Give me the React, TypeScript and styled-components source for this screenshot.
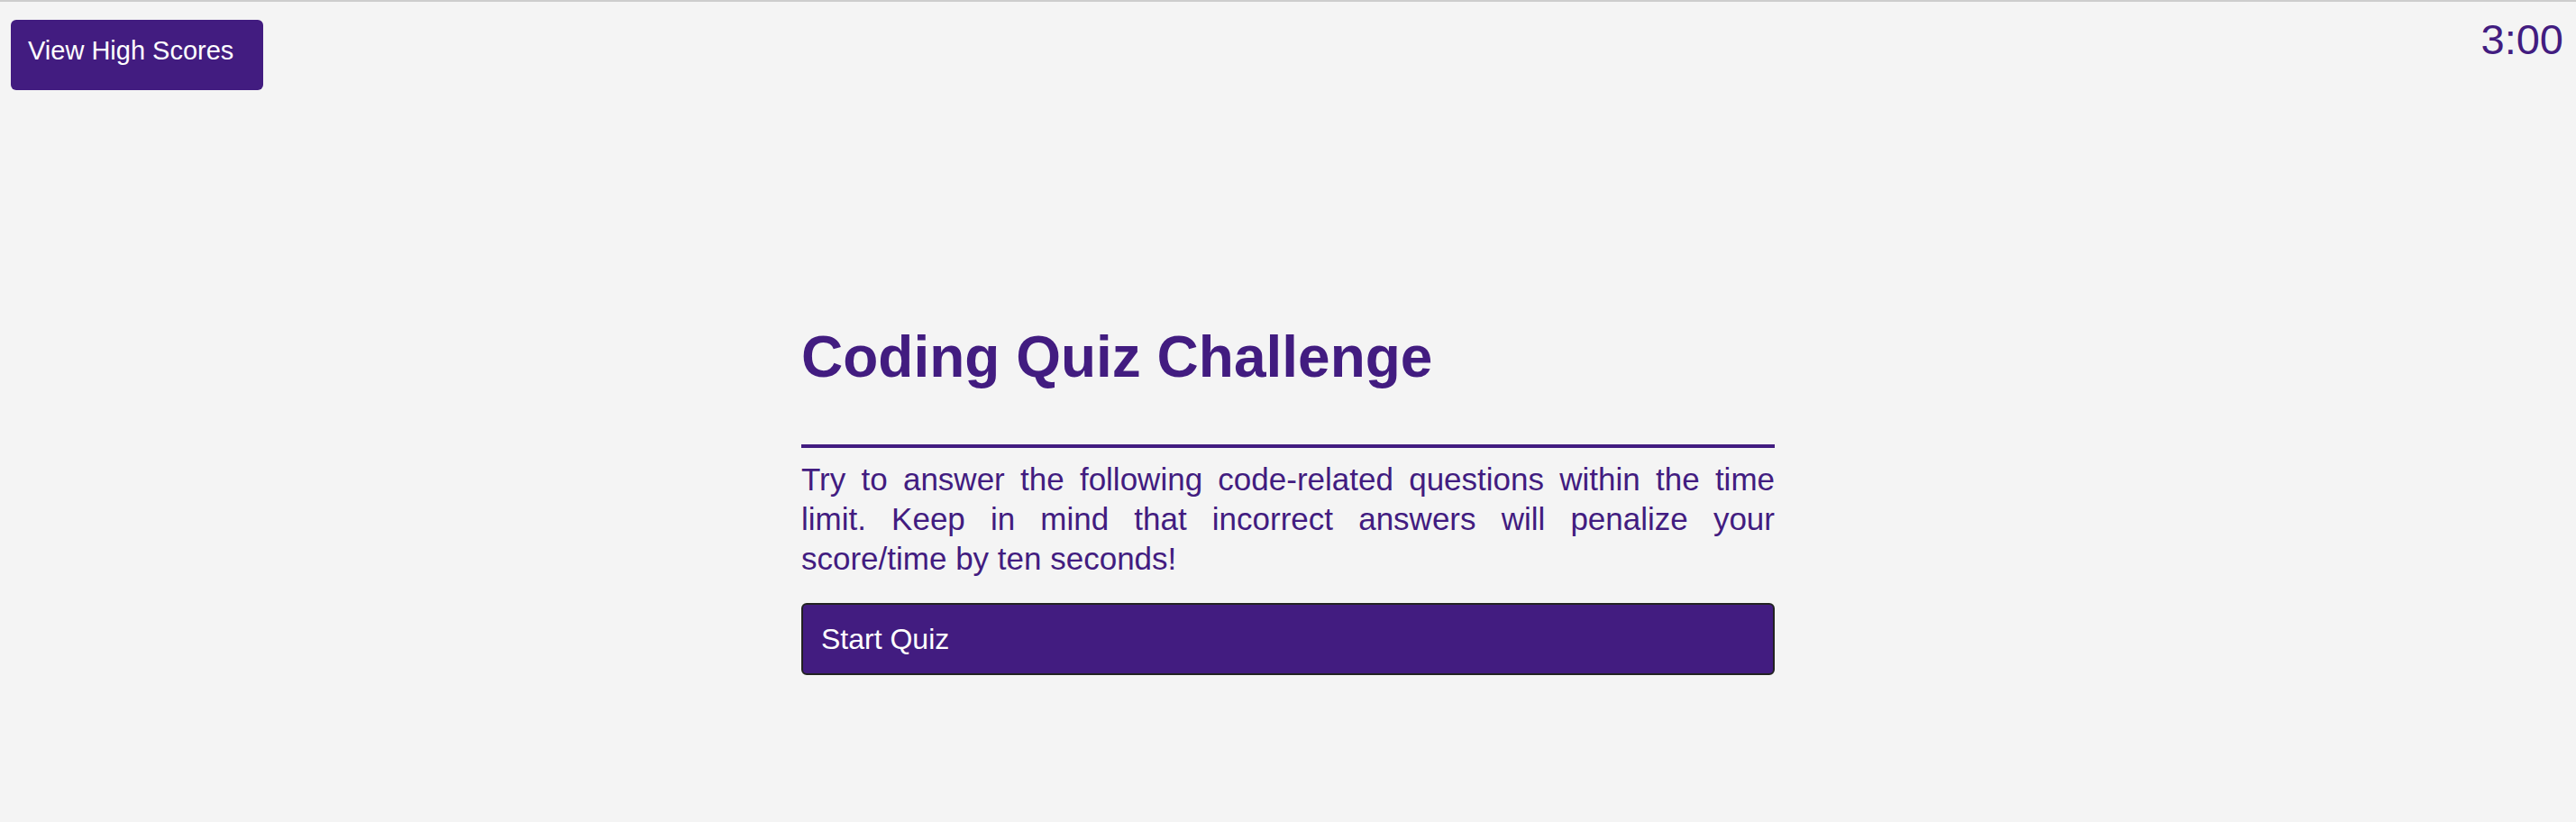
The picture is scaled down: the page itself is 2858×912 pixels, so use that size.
import React from "react";
import styled, { createGlobalStyle } from "styled-components";

const purple = "#421c80";

const Global = createGlobalStyle`
  html, body {
    margin: 0;
    padding: 0;
    background: #f4f4f4;
  }
  body {
    border-top: 2px solid #cdcdcd;
    font-family: "Liberation Sans", Arial, sans-serif;
  }
`;

const Header = styled.header`
  display: flex;
  justify-content: space-between;
  align-items: flex-start;
  padding: 20px 14px 0 12px;
`;

const ScoresButton = styled.button`
  box-sizing: border-box;
  width: 280px;
  height: 78px;
  padding: 18px 19px 0;
  display: flex;
  align-items: flex-start;
  background: ${purple};
  color: #ffffff;
  border: none;
  border-radius: 6px;
  font-family: "Liberation Sans", Arial, sans-serif;
  font-size: 29px;
  line-height: 32px;
  cursor: pointer;
`;

const Timer = styled.div`
  color: ${purple};
  font-family: "Liberation Sans", Arial, sans-serif;
  font-weight: 400;
  font-size: 47px;
  line-height: 44px;
`;

const Main = styled.main`
  width: 1080px;
  margin: 260px auto 0;
  display: flex;
  flex-direction: column;
`;

const Title = styled.h1`
  margin: 0;
  color: ${purple};
  font-size: 64px;
  line-height: 72px;
  font-weight: 700;
`;

const Rule = styled.hr`
  margin: 61px 0 0;
  height: 4px;
  border: none;
  background: ${purple};
`;

const Intro = styled.p`
  margin: 13px 0 0;
  color: ${purple};
  font-size: 35px;
  line-height: 44px;
  text-align: justify;
`;

const StartButton = styled.button`
  box-sizing: border-box;
  margin-top: 27px;
  height: 80px;
  width: 100%;
  padding: 0 20px;
  display: flex;
  align-items: center;
  background: ${purple};
  color: #ffffff;
  border: 2px solid #222222;
  border-radius: 6px;
  font-family: "Liberation Sans", Arial, sans-serif;
  font-size: 32px;
  cursor: pointer;
`;

export default function App() {
  return (
    <>
      <Global />
      <Header>
        <ScoresButton>View High Scores</ScoresButton>
        <Timer>3:00</Timer>
      </Header>
      <Main>
        <Title>Coding Quiz Challenge</Title>
        <Rule />
        <Intro>
          Try to answer the following code-related questions within the time
          limit. Keep in mind that incorrect answers will penalize your
          score/time by ten seconds!
        </Intro>
        <StartButton>Start Quiz</StartButton>
      </Main>
    </>
  );
}
